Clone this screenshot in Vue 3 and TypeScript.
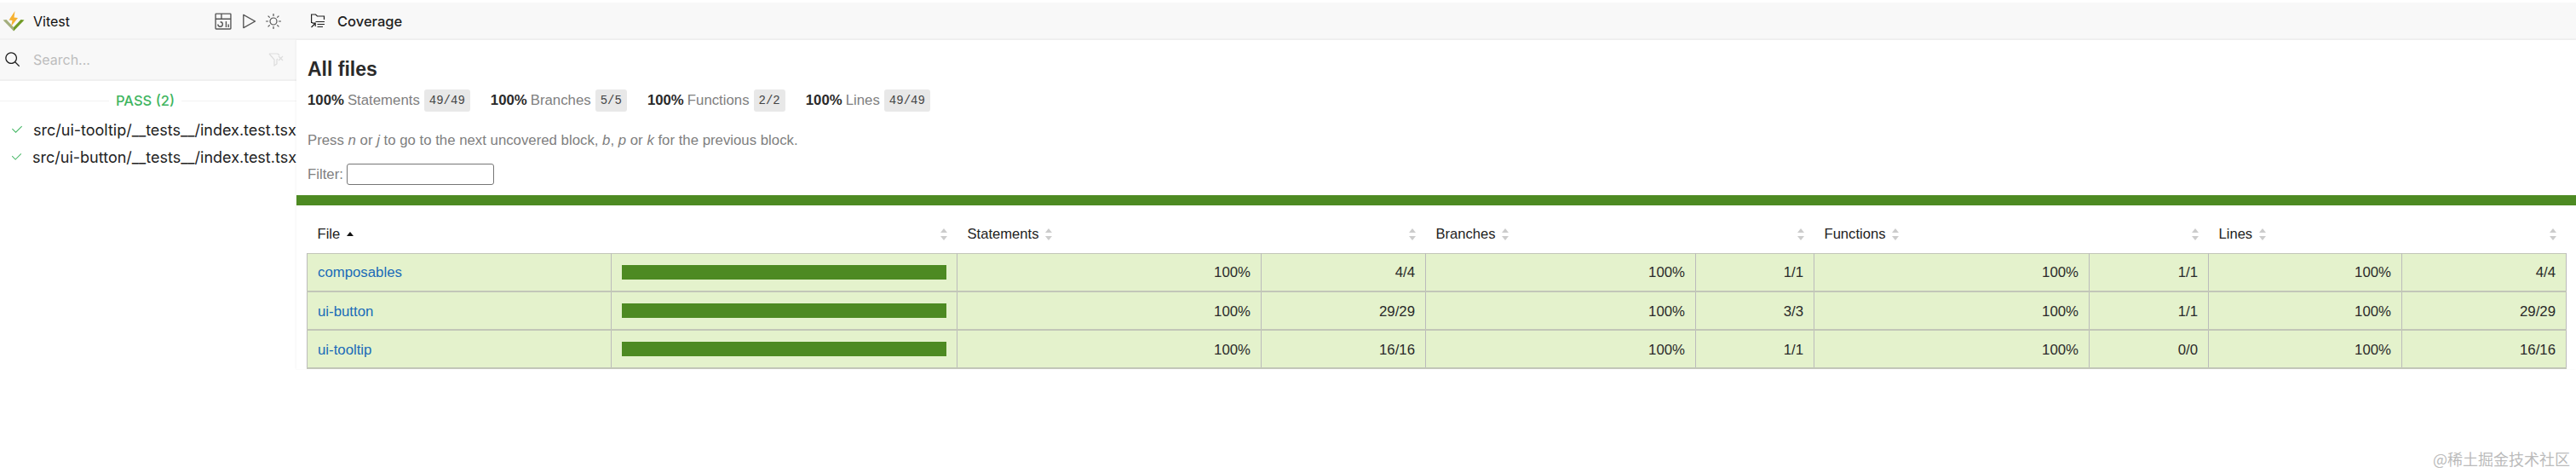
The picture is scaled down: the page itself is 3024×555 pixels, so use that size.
<script setup lang="ts">
/* 覆盖率报告的数据 */
const summary = [
  { label: 'Statements', count: '49/49' },
  { label: 'Branches', count: '5/5' },
  { label: 'Functions', count: '2/2' },
  { label: 'Lines', count: '49/49' },
]

const testFiles = ['src/ui-tooltip/__tests__/index.test.tsx', 'src/ui-button/__tests__/index.test.tsx']

const colWidths = [357, 406, 357, 193, 317, 139, 323, 140, 227, 193]

const metrics = ['Statements', 'Branches', 'Functions', 'Lines']

const rows = [
  { name: 'composables', counts: ['4/4', '1/1', '1/1', '4/4'] },
  { name: 'ui-button', counts: ['29/29', '3/3', '1/1', '29/29'] },
  { name: 'ui-tooltip', counts: ['16/16', '1/1', '0/0', '16/16'] },
]
</script>

<template>
  <div class="page">
    <header class="topbar">
      <div class="topbar-left">
        <svg class="logo" viewBox="0 0 26 24" width="26" height="24">
          <path d="M0.5 10.5 L13 23.5 L13 19 L4.5 10 Z" fill="#a3ae7c" />
          <path d="M25.5 10.5 L13 23.5 L13 19 L21.5 10 Z" fill="#6f9a24" />
          <path d="M14.5 0 L7.5 10.5 L11.5 11 L10 18 L18 8 L13.5 7.5 Z" fill="#f6b130" />
        </svg>
        <span class="brand">Vitest</span>
        <div class="tools">
          <svg class="tool-icon" viewBox="0 0 32 32" width="22" height="22">
            <path d="M24 21h2v5h-2zm-4-5h2v10h-2zm-9 10a5.006 5.006 0 0 1-5-5h2a3 3 0 1 0 3-3v-2a5 5 0 0 1 0 10z" />
            <path d="M28 2H4a2 2 0 0 0-2 2v24a2 2 0 0 0 2 2h24a2.003 2.003 0 0 0 2-2V4a2.002 2.002 0 0 0-2-2zm0 9H14V4h14zM12 4v7H4V4zM4 28V13h24l.002 15z" />
          </svg>
          <svg class="tool-icon" viewBox="0 0 32 32" width="22" height="22">
            <path d="M7 28a1 1 0 0 1-1-1V5a1 1 0 0 1 1.482-.876l20 11a1 1 0 0 1 0 1.752l-20 11A1 1 0 0 1 7 28zM8 6.69v18.62L24.925 16z" />
          </svg>
          <svg class="tool-icon sun" viewBox="0 0 20 20" width="20" height="20" fill="none" stroke="#555" stroke-width="1.2">
            <circle cx="10" cy="10" r="4" />
            <path d="M10 1v3M10 16v3M1 10h3M16 10h3M3.6 3.6l2.1 2.1M14.3 14.3l2.1 2.1M3.6 16.4l2.1-2.1M14.3 5.7l2.1-2.1" />
          </svg>
        </div>
      </div>
      <div class="topbar-right">
        <svg class="cov-icon" viewBox="0 0 18 17" width="18" height="17" fill="none" stroke="#222" stroke-width="1.2">
          <path d="M3 10.5 H1.6 V1 H6.5 L8.5 3 H16.5 V7" />
          <path d="M6.5 9.5 H17M8.5 12.5 H17M8.5 15.5 H15" />
          <path d="M1.5 16 L6 11.5M2.5 11.2 H6.2 V15" />
        </svg>
        <span class="cov-title">Coverage</span>
      </div>
    </header>

    <div class="body">
      <aside class="sidebar">
        <div class="search">
          <svg viewBox="0 0 32 32" width="20" height="20" fill="#222">
            <path d="M29 27.586l-7.552-7.552a11.018 11.018 0 1 0-1.414 1.414L27.586 29zM4 13a9 9 0 1 1 9 9a9.01 9.01 0 0 1-9-9z" />
          </svg>
          <span class="placeholder">Search...</span>
          <svg class="filter-icon" viewBox="0 0 18 16" width="18" height="16" fill="none" stroke="#ddd" stroke-width="1.2">
            <path d="M1 1 H11 L13 3 M1 1 L7 8 V15 L10 13 V8 L11 7" />
            <path d="M12 4 L17 9 M17 4 L12 9" />
          </svg>
        </div>
        <div class="pass-head"><span>PASS (2)</span></div>
        <div v-for="file in testFiles" :key="file" class="test-row">
          <svg viewBox="0 0 32 32" width="16" height="16" fill="#3fb560">
            <path d="M13 24l-9-9 1.414-1.414L13 21.171 26.586 7.586 28 9 13 24z" />
          </svg>
          <span class="test-name">{{ file }}</span>
        </div>
      </aside>

      <main class="report">
        <div class="report-head">
          <h1>All files</h1>
          <div class="summary">
            <div v-for="item in summary" :key="item.label" class="summary-item">
              <strong>100%</strong>
              <span class="quiet">{{ item.label }}</span>
              <span class="badge">{{ item.count }}</span>
            </div>
          </div>
          <p class="quiet hint">
            Press <em>n</em> or <em>j</em> to go to the next uncovered block, <em>b</em>, <em>p</em> or <em>k</em> for
            the previous block.
          </p>
          <div class="filter">
            <label class="quiet">Filter:</label>
            <input type="text" />
          </div>
        </div>
        <div class="status-line"></div>

        <table class="cov-table">
          <colgroup>
            <col v-for="(w, i) in colWidths" :key="i" :style="{ width: w + 'px' }" />
          </colgroup>
          <thead>
            <tr>
              <th>File <i class="sort-asc"></i></th>
              <th class="end"><i class="sorter"></i></th>
              <template v-for="m in metrics" :key="m">
                <th>{{ m }} <i class="sorter"></i></th>
                <th class="end"><i class="sorter"></i></th>
              </template>
            </tr>
          </thead>
          <tbody>
            <tr v-for="row in rows" :key="row.name">
              <td class="name"><a href="#">{{ row.name }}</a></td>
              <td class="pic"><div class="bar"></div></td>
              <template v-for="(count, i) in row.counts" :key="i">
                <td class="num">100%</td>
                <td class="num">{{ count }}</td>
              </template>
            </tr>
          </tbody>
        </table>
      </main>
    </div>

    <div class="watermark">@稀土掘金技术社区</div>
  </div>
</template>

<style>
html,
body {
  margin: 0;
  background: #fff;
}
</style>

<style scoped>
.page {
  position: relative;
  width: 3024px;
  height: 555px;
  overflow: hidden;
  padding-top: 3px;
  box-sizing: border-box;
  background: #fff;
  font-family: 'Liberation Sans', Arial, sans-serif;
  font-size: 16.8px;
  color: #222;
}

.topbar {
  display: flex;
  height: 44px;
  padding-top: 1px;
  box-sizing: border-box;
  background: #f8f8f8;
  border-bottom: 2px solid #f1f1f1;
  font-family: Inter, 'Noto Sans', sans-serif;
}

.topbar-left {
  width: 348px;
  display: flex;
  align-items: center;
  padding-left: 3px;
  box-sizing: border-box;
}

.brand {
  margin-left: 10px;
  font-size: 16px;
  color: #111;
}

.tools {
  margin-left: 169px;
  display: flex;
  align-items: center;
  gap: 8px;
}

.tool-icon {
  fill: #555;
}

.tool-icon.sun {
  fill: none;
}

.topbar-right {
  display: flex;
  align-items: center;
  padding-left: 16px;
}

.cov-title {
  margin-left: 14px;
  font-size: 16.5px;
  font-weight: 500;
  color: #222;
}

.body {
  display: flex;
}

.sidebar {
  width: 348px;
  flex: none;
  overflow: hidden;
  font-family: Inter, 'Noto Sans', sans-serif;
}

.search {
  height: 48px;
  box-sizing: border-box;
  display: flex;
  align-items: center;
  padding: 0 15px 0 5px;
  background: #f8f8f8;
  border-bottom: 2px solid #f0f0f0;
}

.placeholder {
  margin-left: 14px;
  flex: 1;
  color: #bdbdbd;
  font-size: 16px;
}

.pass-head {
  display: flex;
  align-items: center;
  height: 36px;
  margin-top: 5px;
  color: #3fb560;
  font-size: 16.5px;
  font-weight: 500;
}

.pass-head::before,
.pass-head::after {
  content: '';
  height: 1px;
  background: #f3f3f3;
}

.pass-head::before {
  width: 128px;
}

.pass-head::after {
  flex: 1;
}

.pass-head span {
  padding: 0 8px;
}

.test-row {
  display: flex;
  align-items: center;
  height: 32px;
  padding-left: 12px;
  white-space: nowrap;
}

.test-name {
  margin-left: 11px;
  font-size: 18px;
  color: #222;
}

.report {
  flex: 1;
  min-width: 0;
  box-shadow: -1px 0 2px rgba(0, 0, 0, 0.04);
}

.report-head {
  padding-left: 13px;
}

h1 {
  margin: 0;
  padding-top: 21px;
  font-size: 23px;
  line-height: 26px;
  font-weight: 700;
  color: #2a2a2a;
}

.summary {
  display: flex;
  gap: 24px;
  margin-top: 11px;
}

.summary-item {
  display: flex;
  align-items: center;
  gap: 4px;
  height: 26px;
}

.summary-item strong {
  color: #2a2a2a;
}

.quiet {
  color: #808080;
}

.badge {
  margin-left: 1px;
  padding: 0 6px;
  height: 26px;
  line-height: 26px;
  background: #e8e8e8;
  border-radius: 3px;
  font-family: 'Liberation Mono', monospace;
  font-size: 14px;
  color: #444;
}

.hint {
  margin: 24px 0 0;
  line-height: 20px;
}

.filter {
  display: flex;
  align-items: center;
  gap: 4px;
  margin-top: 17px;
}

.filter input {
  width: 173px;
  height: 25px;
  padding: 0;
  box-sizing: border-box;
  border: 1px solid #767676;
  border-radius: 3px;
  background: #fff;
}

.status-line {
  height: 12px;
  margin-top: 12px;
  background: #4d8a22;
}

.cov-table {
  margin: 16px 0 0 12px;
  width: 2652px;
  table-layout: fixed;
  border-collapse: collapse;
}

th {
  height: 40px;
  padding: 0 12px 4px;
  box-sizing: border-box;
  text-align: left;
  font-size: 16.6px;
  font-weight: 400;
  color: #222;
  white-space: nowrap;
}

th.end {
  text-align: right;
}

.sorter,
.sort-asc {
  display: inline-block;
  position: relative;
  width: 8px;
  height: 14px;
  margin-left: 3px;
  vertical-align: -2px;
}

.sorter::before,
.sorter::after,
.sort-asc::before {
  content: '';
  position: absolute;
  left: 0;
  border-left: 4px solid transparent;
  border-right: 4px solid transparent;
}

.sorter::before {
  top: 0;
  border-bottom: 5px solid #ccc;
}

.sorter::after {
  bottom: 0;
  border-top: 5px solid #ccc;
}

.sort-asc::before {
  top: 4px;
  border-bottom: 5px solid #111;
}

td {
  height: 45px;
  padding: 2px 12px 0;
  box-sizing: border-box;
  background: #e4f2cc;
  border: 1px solid #bbb;
  color: #2a2a2a;
}

td.pic {
  padding-top: 0;
}

tbody tr td {
  border-top-color: #c2c6b8;
  border-bottom-color: #c2c6b8;
  border-bottom-width: 2px;
}

td a {
  color: #1a6bb8;
  text-decoration: none;
}

.num {
  text-align: right;
}

.bar {
  height: 17px;
  background: #4d8a22;
}

.watermark {
  position: absolute;
  right: 7px;
  bottom: 5px;
  font-family: 'Noto Sans CJK SC', sans-serif;
  font-size: 18px;
  line-height: 24px;
  color: #bbb;
}
</style>
